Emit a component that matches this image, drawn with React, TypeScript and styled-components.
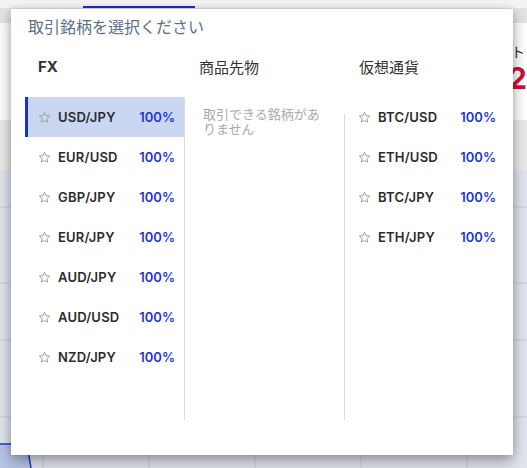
import styled, { createGlobalStyle } from 'styled-components'

interface Active {
  $active?: boolean
}

const fxPairs = ['USD/JPY', 'EUR/USD', 'GBP/JPY', 'EUR/JPY', 'AUD/JPY', 'AUD/USD', 'NZD/JPY']
const cryptoPairs = ['BTC/USD', 'ETH/USD', 'BTC/JPY', 'ETH/JPY']

const StarIcon = () => (
  <svg width="13" height="13" viewBox="0 0 24 24" fill="none" stroke="#999" strokeWidth="1.7" strokeLinejoin="round">
    <path d="M12 2.5l2.9 6.1 6.6.8-4.9 4.6 1.3 6.6L12 17.3l-5.9 3.3 1.3-6.6-4.9-4.6 6.6-.8z" />
  </svg>
)

const PairRow = ({ name, active }: { name: string; active?: boolean }) => (
  <Row $active={active}>
    <StarIcon />
    <PairName>{name}</PairName>
    <Rate>100%</Rate>
  </Row>
)

export default function App() {
  return (
    <Page>
      <GlobalStyle />
      <TopStrip>
        <TabLine />
      </TopStrip>
      <HeaderBar />
      <InfoSection>
        <PriceBlock>
          <PriceLabel>チャート</PriceLabel>
          <Price>152</Price>
        </PriceBlock>
      </InfoSection>
      <Band />
      <ChartArea>
        <svg width="527" height="298" viewBox="0 0 527 298">
          {[37, 113, 170, 247].map(y => (
            <line key={y} x1="0" x2="527" y1={y} y2={y} stroke="#c9ccd6" strokeWidth="1" />
          ))}
          {[43, 149, 255, 361, 467].map(x => (
            <line key={x} x1={x} x2={x} y1="0" y2="298" stroke="#c9ccd6" strokeWidth="1" />
          ))}
          <path d="M0 274 L27 274 L31 298 L0 298 Z" fill="#b7c5e6" />
          <path d="M0 274 L27 274 L31 298" fill="none" stroke="#1a36c8" strokeWidth="1.5" />
        </svg>
      </ChartArea>

      {/* 銘柄選択モーダル */}
      <Modal>
        <Title>取引銘柄を選択ください</Title>
        <Columns>
          <Column>
            <ColumnHead $bold>FX</ColumnHead>
            <FxBody>
              {fxPairs.map((p, i) => (
                <PairRow key={p} name={p} active={i === 0} />
              ))}
            </FxBody>
          </Column>
          <Column>
            <ColumnHead>商品先物</ColumnHead>
            <EmptyBody>
              <EmptyText>取引できる銘柄がありません</EmptyText>
            </EmptyBody>
          </Column>
          <Column>
            <ColumnHead>仮想通貨</ColumnHead>
            <CryptoBody>
              {cryptoPairs.map(p => (
                <PairRow key={p} name={p} />
              ))}
            </CryptoBody>
          </Column>
        </Columns>
      </Modal>
    </Page>
  )
}

const GlobalStyle = createGlobalStyle`
  body {
    margin: 0;
    font-family: Inter, "Noto Sans CJK JP", sans-serif;
  }
`

// PAGE BEHIND
const Page = styled.div`
  position: relative;
  width: 527px;
  height: 468px;
  overflow: hidden;
  display: flex;
  flex-direction: column;
  background: #e2e5ee;
`

const TopStrip = styled.div`
  height: 8px;
  background: #f4f4f4;
  display: flex;
  align-items: flex-end;
`

const TabLine = styled.div`
  margin-left: 83px;
  width: 112px;
  height: 2px;
  background: #1a2fd0;
`

const HeaderBar = styled.div`
  height: 15px;
  background: #e4e4e4;
`

const InfoSection = styled.div`
  height: 97px;
  background: #fff;
  display: flex;
  justify-content: flex-end;
`

const PriceBlock = styled.div`
  display: flex;
  flex-direction: column;
  align-items: flex-end;
  padding-top: 18px;
`

const PriceLabel = styled.div`
  font-size: 14px;
  color: #333;
  margin-right: 2px;
  font-family: "Noto Sans CJK JP", sans-serif;
`

const Price = styled.div`
  font-size: 30px;
  font-weight: 700;
  color: #d0103a;
  line-height: 34px;
`

const Band = styled.div`
  height: 50px;
  background: #ebebeb;
`

const ChartArea = styled.div`
  flex: 1;
  display: flex;
`

// MODAL
const Modal = styled.div`
  position: absolute;
  left: 11px;
  top: 9px;
  width: 502px;
  height: 446px;
  box-sizing: border-box;
  background: #fff;
  padding: 5px 0 35px 14px;
  box-shadow:
    0 6px 14px rgba(0, 0, 0, 0.35),
    0 0 6px rgba(0, 0, 0, 0.12);
  display: flex;
  flex-direction: column;
`

const Title = styled.div`
  margin-left: 3px;
  font-family: "Noto Sans CJK JP", sans-serif;
  font-size: 16px;
  line-height: 24px;
  color: #5b6f88;
`

const Columns = styled.div`
  margin-top: 18px;
  flex: 1;
  display: grid;
  grid-template-columns: 160px 160px 160px;
`

const Column = styled.div`
  display: flex;
  flex-direction: column;
`

const ColumnHead = styled.div<{ $bold?: boolean }>`
  padding-left: ${props => (props.$bold ? '13px' : '14px')};
  height: 22px;
  line-height: 22px;
  font-family: ${props => (props.$bold ? 'Inter, sans-serif' : '"Noto Sans CJK JP", sans-serif')};
  font-size: 15px;
  font-weight: ${props => (props.$bold ? 700 : 400)};
  color: #333;
  margin-bottom: 19px;
`

const FxBody = styled.div`
  flex: 1;
  border-right: 1px solid #dcdcdc;
`

const EmptyBody = styled.div`
  flex: 1;
  position: relative;
  padding: 9px 0 0 18px;

  &::after {
    content: '';
    position: absolute;
    right: 0;
    top: 17px;
    bottom: 0;
    width: 1px;
    background: #dcdcdc;
  }
`

const EmptyText = styled.div`
  width: 124px;
  font-family: "Noto Sans CJK JP", sans-serif;
  font-size: 13px;
  line-height: 15px;
  color: #aaa;
`

const CryptoBody = styled.div`
  flex: 1;
`

const Row = styled.div<Active>`
  height: 40px;
  box-sizing: border-box;
  display: flex;
  align-items: center;
  gap: 7px;
  padding: 0 9px 0 10px;
  border-left: 3px solid ${props => (props.$active ? '#1a2fd0' : 'transparent')};
  background: ${props => (props.$active ? '#c9d7f3' : 'transparent')};
`

const PairName = styled.span`
  font-size: 13px;
  font-weight: 600;
  letter-spacing: 0.2px;
  color: #2b2b2b;
`

const Rate = styled.span`
  margin-left: auto;
  font-size: 13px;
  font-weight: 600;
  color: #1f35d6;
`
